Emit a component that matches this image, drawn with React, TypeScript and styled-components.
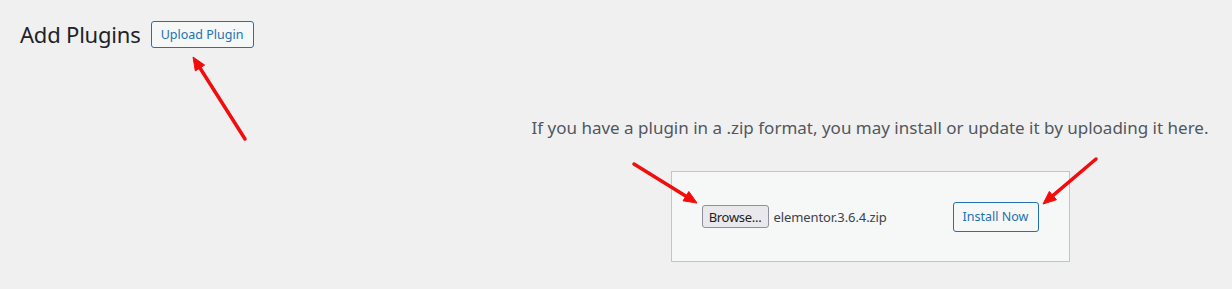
import React from 'react';
import styled, { createGlobalStyle } from 'styled-components';

const GlobalStyle = createGlobalStyle`
  html, body {
    margin: 0;
    padding: 0;
    background: #f0f0f1;
  }
  body {
    font-family: "Noto Sans", "Open Sans", sans-serif;
    color: #1d2327;
  }
`;

const Page = styled.div`
  position: relative;
  width: 1232px;
  height: 289px;
  overflow: hidden;
`;

const Header = styled.div`
  display: flex;
  align-items: center;
  gap: 10px;
  padding: 21px 0 0 20px;
`;

const Title = styled.h1`
  margin: 0;
  font-size: 22px;
  font-weight: 400;
  line-height: 27px;
  color: #1d2327;
  letter-spacing: -0.2px;
`;

const OutlineButton = styled.button<{ $height: number; $width: number }>`
  display: inline-flex;
  align-items: center;
  justify-content: center;
  box-sizing: border-box;
  height: ${(p) => p.$height}px;
  width: ${(p) => p.$width}px;
  padding: 0;
  border: 1px solid #2271b1;
  border-radius: 3px;
  background: #f6f7f7;
  color: #2271b1;
  font-family: "Noto Sans", "Open Sans", sans-serif;
  font-size: 12.5px;
  cursor: pointer;
`;

const UploadSection = styled.div`
  margin-left: 507px;
  width: 726px;
  display: flex;
  flex-direction: column;
  align-items: center;
`;

const Help = styled.p`
  margin: 67px 0 0;
  font-size: 17px;
  line-height: 25px;
  color: #50575e;
  letter-spacing: 0;
  white-space: nowrap;
`;

const UploadForm = styled.form`
  box-sizing: border-box;
  width: 399px;
  height: 91px;
  margin-top: 31px;
  padding: 0 30px;
  display: flex;
  align-items: center;
  justify-content: space-between;
  background: #f6f7f7;
  border: 1px solid #c3c4c7;
`;

const FileGroup = styled.div`
  display: flex;
  align-items: center;
  gap: 5px;
`;

const BrowseButton = styled.span`
  box-sizing: border-box;
  display: inline-flex;
  align-items: center;
  justify-content: center;
  width: 67px;
  height: 23px;
  border: 1px solid #8f8f9d;
  border-radius: 3px;
  background: #e9e9ed;
  color: #1d1d1d;
  font-size: 13px;
  letter-spacing: -0.3px;
`;

const FileName = styled.span`
  font-size: 13px;
  color: #3c434a;
  letter-spacing: -0.1px;
`;

const Overlay = styled.svg`
  position: absolute;
  top: 0;
  left: 0;
  pointer-events: none;
`;

type Arrow = { tail: [number, number]; tip: [number, number] };

const arrows: Arrow[] = [
  { tail: [245, 139], tip: [193, 57] },
  { tail: [634, 164], tip: [697, 203] },
  { tail: [1096, 159], tip: [1043, 204] },
];

const ArrowMark: React.FC<Arrow> = ({ tail, tip }) => {
  const dx = tip[0] - tail[0];
  const dy = tip[1] - tail[1];
  const len = Math.hypot(dx, dy);
  const ux = dx / len;
  const uy = dy / len;
  const head = 13;
  const half = 5.5;
  const bx = tip[0] - ux * head;
  const by = tip[1] - uy * head;
  const nx = -uy * half;
  const ny = ux * half;
  const pts = `${tip[0]},${tip[1]} ${bx + nx},${by + ny} ${bx - nx},${by - ny}`;
  return (
    <g>
      <line x1={tail[0]} y1={tail[1]} x2={bx + ux * 2} y2={by + uy * 2} stroke="#f20d0d" strokeWidth={3.5} strokeLinecap="round" />
      <polygon points={pts} fill="#f20d0d" stroke="#f20d0d" strokeWidth={1} strokeLinejoin="round" />
    </g>
  );
};

const App: React.FC = () => {
  return (
    <>
      <GlobalStyle />
      <Page>
        <Header>
          <Title>Add Plugins</Title>
          <OutlineButton type="button" $height={27} $width={103}>
            Upload Plugin
          </OutlineButton>
        </Header>
        <UploadSection>
          <Help>If you have a plugin in a .zip format, you may install or update it by uploading it here.</Help>
          <UploadForm onSubmit={(e) => e.preventDefault()}>
            <FileGroup>
              <BrowseButton>Browse...</BrowseButton>
              <FileName>elementor.3.6.4.zip</FileName>
            </FileGroup>
            <OutlineButton type="submit" $height={30} $width={86}>
              Install Now
            </OutlineButton>
          </UploadForm>
        </UploadSection>
        <Overlay width={1232} height={289} viewBox="0 0 1232 289">
          {arrows.map((a, i) => (
            <ArrowMark key={i} {...a} />
          ))}
        </Overlay>
      </Page>
    </>
  );
};

export default App;
